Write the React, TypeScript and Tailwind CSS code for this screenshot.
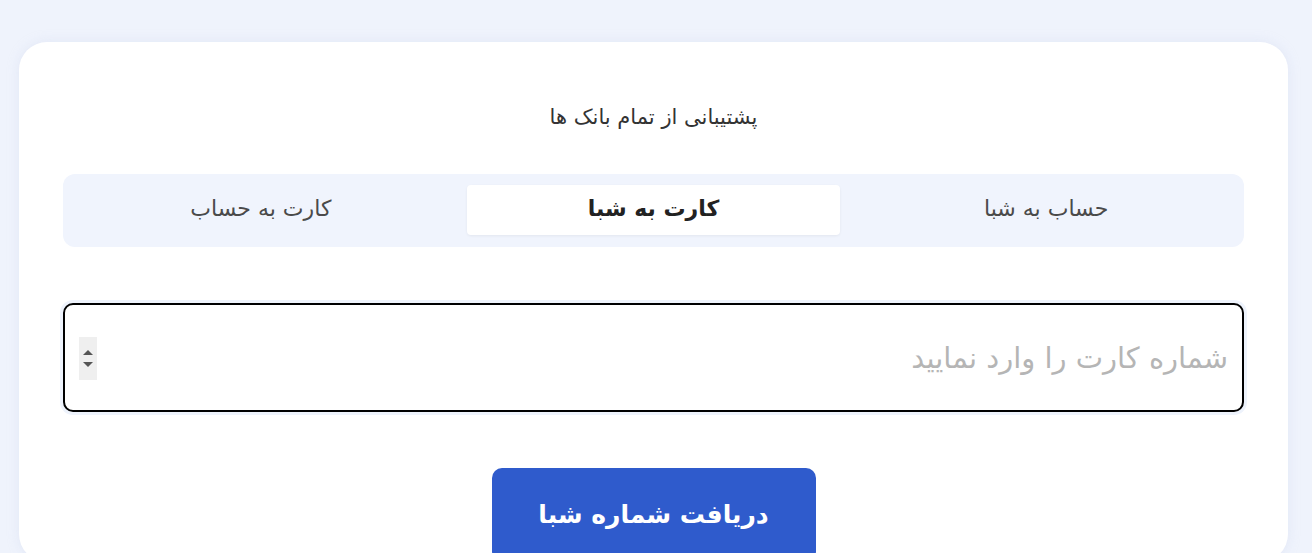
import { useState } from "react";

const tabs = ["حساب به شبا", "کارت به شبا", "کارت به حساب"];

export default function App() {
  const [active, setActive] = useState(1);
  return (
    <div
      dir="rtl"
      className="min-h-[553px] bg-[#eff3fc] pl-[19px] pr-[24px] pt-[42px] font-['DejaVu_Sans','Noto_Sans',sans-serif]"
    >
      <div className="min-h-[520px] rounded-[28px] bg-white px-[44px] pt-[60px] shadow-[0_0_12px_rgba(200,210,235,0.35)]">
        <p className="h-[30px] text-center text-[21px] leading-[30px] text-[#333]">پشتیبانی از تمام بانک ها</p>

        <div className="mt-[42px] grid grid-cols-3 gap-[19px] rounded-[12px] bg-[#f0f4fd] p-[11px] pb-[12px]">
          {tabs.map((t, i) => (
            <button
              key={t}
              onClick={() => setActive(i)}
              className={
                i === active
                  ? "h-[50px] rounded-[4px] bg-white pb-[4px] text-[22px] font-bold text-[#222] shadow-[0_1px_3px_rgba(0,0,0,0.06)]"
                  : "h-[50px] rounded-[4px] pb-[4px] text-[22px] text-[#4a4a4a]"
              }
            >
              {t}
            </button>
          ))}
        </div>

        <div className="relative mt-[56px]">
          <input
            type="text"
            inputMode="numeric"
            placeholder="شماره کارت را وارد نمایید"
            className="h-[109px] w-full rounded-[10px] border-2 border-black bg-white px-[14px] text-[29px] text-[#222] shadow-[0_0_0_3px_#eef3fc] outline-none placeholder:text-[#b5b5b5]"
          />
          <div className="absolute left-[16px] top-[34px] flex h-[43px] w-[18px] flex-col items-center justify-center gap-[7px] bg-[#efefef]">
            <span className="h-0 w-0 border-x-[5px] border-b-[5px] border-x-transparent border-b-[#555]" />
            <span className="h-0 w-0 border-x-[5px] border-t-[5px] border-x-transparent border-t-[#555]" />
          </div>
        </div>

        <div className="mt-[56px] flex justify-center">
          <button className="h-[94px] w-[324px] rounded-[10px] bg-[#2f5bcc] text-[25px] font-bold text-white">
            دریافت شماره شبا
          </button>
        </div>
      </div>
    </div>
  );
}
